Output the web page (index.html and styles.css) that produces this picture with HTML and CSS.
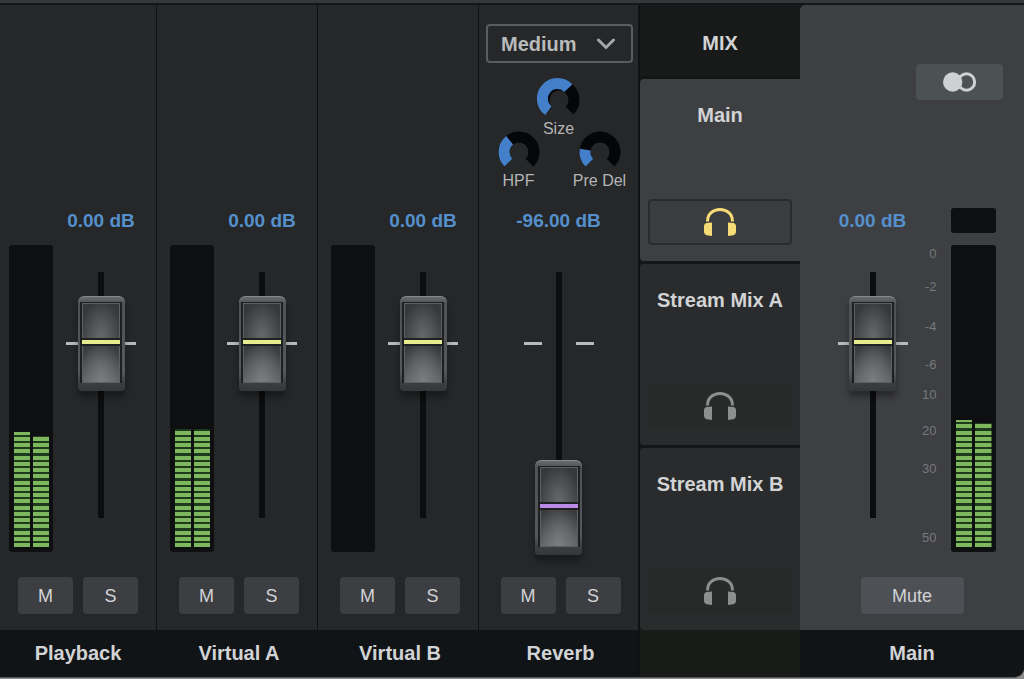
FILE: index.html
```html
<!DOCTYPE html>
<html lang="en">
<head>
    <meta charset="UTF-8">
    <meta name="viewport" content="width=device-width, initial-scale=1.0">
    <title>Mixer</title>
    <link rel="stylesheet" href="styles.css">
</head>
<body>
    <svg class="defs" width="0" height="0" aria-hidden="true">
        <symbol id="headphones" viewBox="0 0 32 28">
            <path d="M3.500 13.500C3.500 6 9 1.500 16 1.500S28.500 6 28.500 13.500" fill="none" stroke="currentColor" stroke-width="3"/>
            <path d="M8 14.500V28l-5.500-.8Q0 26.500 0 24v-5.500Q0 15.500 2.500 15z" fill="currentColor"/>
            <path d="M24 14.500V28l5.500-.8q2.500-.7 2.500-3.200v-5.500q0-3-2.500-3.500z" fill="currentColor"/>
        </symbol>
    </svg>

    <div class="mixer">
        <section class="strip">
            <div class="effects"></div>
            <div class="channel">
                <label class="db" for="fader-playback">0.00 dB</label>
                <div class="meter">
                    <div class="bar" style="--level: 115"></div>
                    <div class="bar" style="--level: 111"></div>
                </div>
                <input class="fader" id="fader-playback" type="range" min="-96" max="14" value="0">
            </div>
            <div class="buttons">
                <button>M</button>
                <button>S</button>
            </div>
            <h2 class="name">Playback</h2>
        </section>

        <section class="strip">
            <div class="effects"></div>
            <div class="channel">
                <label class="db" for="fader-virtual-a">0.00 dB</label>
                <div class="meter">
                    <div class="bar" style="--level: 118"></div>
                    <div class="bar" style="--level: 118"></div>
                </div>
                <input class="fader" id="fader-virtual-a" type="range" min="-96" max="14" value="0">
            </div>
            <div class="buttons">
                <button>M</button>
                <button>S</button>
            </div>
            <h2 class="name">Virtual A</h2>
        </section>

        <section class="strip">
            <div class="effects"></div>
            <div class="channel">
                <label class="db" for="fader-virtual-b">0.00 dB</label>
                <div class="meter">
                    <div class="bar" style="--level: 0"></div>
                    <div class="bar" style="--level: 0"></div>
                </div>
                <input class="fader" id="fader-virtual-b" type="range" min="-96" max="14" value="0">
            </div>
            <div class="buttons">
                <button>M</button>
                <button>S</button>
            </div>
            <h2 class="name">Virtual B</h2>
        </section>

        <section class="strip">
            <div class="effects">
                <div class="preset">
                    <select aria-label="Reverb type">
                        <option>Small</option>
                        <option selected>Medium</option>
                        <option>Large</option>
                    </select>
                    <svg class="chevron" width="18" height="12" viewBox="0 0 18 12"><path d="M1.500 2L9 9.500 16.500 2" fill="none" stroke="currentColor" stroke-width="3" stroke-linecap="round"/></svg>
                </div>
                <div class="knobs">
                    <div class="knob size">
                        <svg width="42" height="36" viewBox="0 0 42 36">
                            <path class="rest" d="M10.400 31.600A15 15 0 1 1 31.600 31.600"/>
                            <path class="set" d="M10.400 31.600A15 15 0 1 1 30.300 9.300"/>
                        </svg>
                        <span>Size</span>
                    </div>
                    <div class="knob">
                        <svg width="42" height="36" viewBox="0 0 42 36">
                            <path class="rest" d="M10.400 31.600A15 15 0 1 1 31.600 31.600"/>
                            <path class="set" d="M10.400 31.600A15 15 0 0 1 11.700 9.300"/>
                        </svg>
                        <span>HPF</span>
                    </div>
                    <div class="knob">
                        <svg width="42" height="36" viewBox="0 0 42 36">
                            <path class="rest" d="M10.400 31.600A15 15 0 1 1 31.600 31.600"/>
                            <path class="set" d="M10.400 31.600A15 15 0 0 1 6.200 18.600"/>
                        </svg>
                        <span>Pre Del</span>
                    </div>
                </div>
            </div>
            <div class="channel no-meter">
                <label class="db" for="fader-reverb">-96.00 dB</label>
                <input class="fader reverb" id="fader-reverb" type="range" min="-96" max="14" value="-96">
            </div>
            <div class="buttons">
                <button>M</button>
                <button>S</button>
            </div>
            <h2 class="name">Reverb</h2>
        </section>

        <nav class="mixes">
            <h2 class="mixes-title">MIX</h2>
            <div class="mix active">
                <h3>Main</h3>
                <button aria-label="Listen to Main"><svg width="32" height="28"><use href="#headphones"/></svg></button>
            </div>
            <div class="mix">
                <h3>Stream Mix A</h3>
                <button aria-label="Listen to Stream Mix A"><svg width="32" height="28"><use href="#headphones"/></svg></button>
            </div>
            <div class="mix">
                <h3>Stream Mix B</h3>
                <button aria-label="Listen to Stream Mix B"><svg width="32" height="28"><use href="#headphones"/></svg></button>
            </div>
            <div class="mixes-footer"></div>
        </nav>

        <section class="strip master">
            <div class="effects">
                <button class="link" aria-label="Stereo link">
                    <svg width="34" height="20" viewBox="0 0 34 20">
                        <circle cx="23.500" cy="10" r="8.200" fill="none" stroke="currentColor" stroke-width="3"/>
                        <circle cx="9.700" cy="10" r="9.700" fill="currentColor"/>
                    </svg>
                </button>
            </div>
            <div class="channel">
                <label class="db" for="fader-main">0.00 dB</label>
                <div class="clip"></div>
                <input class="fader" id="fader-main" type="range" min="-96" max="14" value="0">
                <div class="scale">
                    <span>0</span>
                    <span>-2</span>
                    <span>-4</span>
                    <span>-6</span>
                    <span>10</span>
                    <span>20</span>
                    <span>30</span>
                    <span>50</span>
                </div>
                <div class="meter">
                    <div class="bar" style="--level: 127"></div>
                    <div class="bar" style="--level: 124"></div>
                </div>
            </div>
            <div class="buttons">
                <button class="mute">Mute</button>
            </div>
            <h2 class="name">Main</h2>
        </section>
    </div>
</body>
</html>
```
FILE: styles.css
```css
* {
    box-sizing: border-box;
}

body {
    margin: 0;
    background-color: #8b8b8b;
    color: #d2d3d4;
    font-family: "Liberation Sans", Arial, sans-serif;
    font-size: 18px;
}

h2, h3 {
    margin: 0;
    font-size: 20px;
    line-height: 24px;
    font-weight: bold;
    text-align: center;
}

button {
    display: flex;
    align-items: center;
    justify-content: center;
    border: none;
    border-radius: 4px;
    padding: 0;
    background-color: #3d3e42;
    color: inherit;
    font: inherit;
}

.defs {
    position: absolute;
}

.mixer {
    display: grid;
    grid-template-columns: 157fr 161fr 161fr 160fr 161fr 224fr;
    border-top: 3px solid #35373a;
    border-bottom: 1px solid #58595a;
    border-bottom-right-radius: 10px;
    background-color: #141617;
    padding: 2px 0 1px;
    overflow: hidden;
}

.strip {
    display: flex;
    flex-direction: column;
    min-width: 0;
    background-color: #252729;
    border-right: 1px solid #0f1112;
}

.effects {
    height: 203px;
    padding-top: 19px;
}

/* Meter and fader */
.channel {
    display: grid;
    grid-template-columns: 44px 70px;
    column-gap: 13px;
    justify-content: center;
    padding-right: 11px;
    margin-bottom: 22px;
}

.strip + .strip .channel {
    padding-right: 7px;
}

.strip + .strip .no-meter {
    grid-template-columns: 100px;
    padding-right: 0;
    justify-items: center;
}

.db {
    grid-column: -2;
    height: 37px;
    font-size: 19px;
    line-height: 26px;
    font-weight: bold;
    text-align: center;
    white-space: nowrap;
    color: #5590cc;
}

.meter {
    grid-row: 2;
    display: flex;
    gap: 3px;
    height: 307px;
    padding: 2px 4px 5px 5px;
    border-radius: 3px;
    background-color: #0e0f10;
}

.bar {
    flex: 1;
    background: repeating-linear-gradient(to top, #7fb75f 0 4px, #1e3a1c 4px calc(100% / 48));
    clip-path: inset(calc(300px - var(--level) * 1px) 0 0 0);
}

.fader {
    -webkit-appearance: none;
    appearance: none;
    writing-mode: vertical-lr;
    direction: rtl;
    width: 70px;
    height: 283px;
    margin: 27px 0 0;
    background:
        linear-gradient(#0c0d0e, #0c0d0e) 50% 0 / 6px 246px no-repeat,
        linear-gradient(#b9babb, #b9babb) 0 70px / 18px 3px no-repeat,
        linear-gradient(#b9babb, #b9babb) 100% 70px / 18px 3px no-repeat;
}

.fader::-webkit-slider-thumb {
    -webkit-appearance: none;
    appearance: none;
    width: 47px;
    height: 95px;
    border-radius: 6px 6px 4px 4px;
    background:
        linear-gradient(var(--mark, #e6eb8f), var(--mark, #e6eb8f)) 50% 44px / 38px 4px no-repeat,
        linear-gradient(#1e2021, #1e2021) 50% 42px / 38px 8px no-repeat,
        radial-gradient(ellipse at 50% 100%, #626566, #626566 10%, transparent 80%) 50% 8px / 36px 34px no-repeat,
        radial-gradient(ellipse at 50% 100%, #7c7d7e, transparent 85%) 50% 50px / 36px 36px no-repeat,
        linear-gradient(#34383a, #3d4041 45%, #37393a 55%, #606162) 50% 8px / 36px 78px no-repeat,
        linear-gradient(#5c6062, #5c6062) 50% 7px / 38px 80px no-repeat,
        linear-gradient(#1d1f20, #1d1f20) 50% 6px / 42px 81px no-repeat,
        linear-gradient(#6a6f72, #4e5254 8%, #55595b 80%, #3b3d3e 92%, #35373a);
    box-shadow: inset 0 1px #85898b, 0 6px 6px rgba(0, 0, 0, 0.35);
}

.fader.reverb {
    --mark: #b98be6;
}

.buttons {
    display: flex;
    justify-content: center;
    gap: 10px;
    margin-bottom: 16px;
}

.buttons button {
    width: 55px;
    height: 37px;
    padding-top: 1px;
}

.buttons .mute {
    width: 103px;
    background-color: #4d5054;
}

.name {
    padding: 11px 0;
    background-color: #101417;
}

.strip + .strip .buttons,
.strip + .strip .name {
    padding-left: 4px;
}

/* Reverb controls */
.preset {
    position: relative;
    margin: 0 5px 16px 7px;
}

.preset select {
    -webkit-appearance: none;
    appearance: none;
    display: block;
    width: 100%;
    height: 39px;
    padding: 0 13px;
    border: 2px solid #5b5c5e;
    border-radius: 4px;
    background-color: transparent;
    color: #b9babb;
    font: bold 20px "Liberation Sans", Arial, sans-serif;
}

.chevron {
    position: absolute;
    right: 18px;
    top: 14px;
    color: #a5a6a7;
    pointer-events: none;
}

.knobs {
    display: grid;
    grid-template-columns: 82px 80px;
    justify-content: center;
    font-size: 16px;
    line-height: 16px;
    color: #b4b5b6;
}

.knob {
    display: flex;
    flex-direction: column;
    align-items: center;
    height: 52px;
}

.knob svg {
    margin-bottom: 6px;
    flex-shrink: 0;
    overflow: visible;
}

.knob.size {
    grid-column: 1 / 3;
}

.knob path {
    fill: none;
    stroke-width: 11;
}

.knob .rest {
    stroke: #050607;
}

.knob .set {
    stroke: #447fc9;
}

/* Mix selector */
.mixes {
    display: flex;
    flex-direction: column;
    gap: 3px;
    border-left: 1px solid #0f1112;
}

.mixes-title {
    height: 71px;
    padding-top: 26px;
    background-color: #181a1a;
}

.mix {
    flex: 1;
    display: flex;
    flex-direction: column;
    justify-content: space-between;
    padding: 24px 8px 16px;
    border-radius: 4px 0 0 4px;
    background-color: #292b2d;
}

.mix.active {
    background-color: #3e3f43;
}

.mix button {
    height: 46px;
    background-color: #282a2a;
    color: #8d8f8f;
}

.mix.active button {
    border: 2px solid #2a2b2e;
    background-color: #3b3c3f;
    color: #f6dc74;
}

.mixes-footer {
    height: 46px;
    margin-top: -3px;
    background-color: #191b19;
}

/* Main output */
.master {
    border-right: none;
    border-top-left-radius: 5px;
    background-color: #3e3f43;
}

.master .effects {
    padding: 59px 21px 0 0;
}

.link {
    width: 87px;
    height: 36px;
    margin-left: auto;
    background-color: #4c5154;
    color: #cfd0d1;
}

.strip.master .channel {
    grid-template-columns: 70px 29px 14px 45px;
    column-gap: 0;
    padding: 0 0 0 9px;
}

.master .db,
.master .fader {
    grid-column: 1;
}

.clip,
.master .meter {
    grid-column: 4;
}

.clip {
    height: 25px;
    border-radius: 3px;
    background-color: #0e0f10;
}

.scale {
    grid-column: 2;
    display: grid;
    grid-template-rows: 33fr 40fr 37fr 30fr 36fr 38fr 68fr 26fr;
    font-size: 13px;
    line-height: 18px;
    text-align: right;
    color: #77797b;
}

.master .fader,
.master .scale {
    grid-row: 2;
}
```
